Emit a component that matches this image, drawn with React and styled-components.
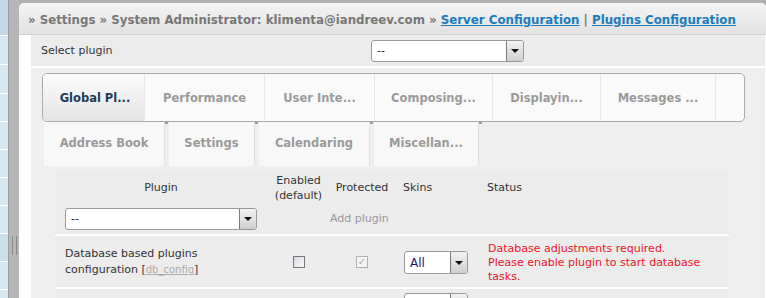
import React from 'react';
import styled, { createGlobalStyle } from 'styled-components';

const Global = createGlobalStyle`
  html, body { margin: 0; padding: 0; }
  body {
    width: 766px; height: 298px; overflow: hidden; background: #fff;
    font-family: "DejaVu Sans", Verdana, sans-serif; font-size: 11px; color: #333;
  }
`;

const Page = styled.div`
  display: flex; height: 298px; overflow: hidden;
`;

const SideList = styled.div`
  width: 8px; flex-shrink: 0; display: flex; flex-direction: column; background: #d6e9f2;
`;
const SideItem = styled.div`
  flex-shrink: 0; height: ${p => p.$h}px;
  background: ${p => (p.$dark ? '#c2dbe6' : p.$sel ? '#c9e0ea' : '#d6e9f2')};
  border-bottom: 1px solid #fff;
`;

const Splitter = styled.div`
  width: 11px; flex-shrink: 0; display: flex; flex-direction: column; align-items: center;
  padding-top: 236px; box-sizing: border-box;
  background: #b6b6b6; border-left: 1px solid #9c9c9c;
`;
const Grip = styled.div`
  width: 3px; height: 19px; border-left: 1px solid #8a8a8a; border-right: 1px solid #8a8a8a;
`;

const Main = styled.div`
  flex: 1; background: #b0b0b0; padding-top: 3px; display: flex; flex-direction: column;
`;
const Panel = styled.div`
  flex: 1; background: #fff; border-radius: 5px 5px 0 0; overflow: hidden;
  display: flex; flex-direction: column;
`;
const Header = styled.div`
  height: 32px; box-sizing: border-box; padding: 2px 0 0 9px; flex-shrink: 0;
  display: flex; align-items: center;
  background: linear-gradient(#f4f4f4, #e2e2e2); border-bottom: 1px solid #d2d2d2;
  font-weight: bold; font-size: 11.8px; color: #777; white-space: nowrap;
`;
const HeadLink = styled.a`
  color: #1c7cbd; text-decoration: underline;
`;
const Body = styled.div`
  flex: 1; padding: 0 1px 0 12px; display: flex;
`;
const Content = styled.div`
  flex: 1; background: #efefef; display: flex; flex-direction: column;
`;
const SelectRow = styled.div`
  height: 31px; display: flex; align-items: center; padding-left: 10px;
  border-bottom: 2px solid #fff; background: #ececec;
`;
const SelectLabel = styled.div`
  width: 330px; color: #333;
`;
const FakeSelect = styled.div`
  width: ${p => p.$w}px; height: ${p => p.$h || 22}px; box-sizing: border-box;
  border: 1px solid #9a9a9a; border-radius: 3px; background: #fff;
  display: flex; align-items: stretch; overflow: hidden;
`;
const SelectText = styled.span`
  flex: 1; display: flex; align-items: center; padding-left: 5px; color: ${p => p.$c || '#222'};
  font-size: ${p => p.$fs || 11}px;
`;
const SelectBtn = styled.span`
  width: 16px; border-left: 1px solid #7a7a7a; display: flex; align-items: center; justify-content: center;
  background: linear-gradient(#f2f2f2, #cfcfcf);
  &::after {
    content: ''; border-left: 4px solid transparent; border-right: 4px solid transparent;
    border-top: 4px solid #111;
  }
`;

const TabsArea = styled.div`
  padding: 5px 20px 0 11px;
`;
const TabBox = styled.div`
  height: 49px; box-sizing: border-box; border: 1px solid #aaa; border-radius: 5px;
  display: flex; background: #fafafa; overflow: hidden;
`;
const Tab = styled.div`
  display: flex; align-items: center; justify-content: center; flex-shrink: 0;
  width: ${p => p.$w}px; box-sizing: border-box; padding-left: ${p => (p.$active ? 3 : 0)}px;
  border-right: 1px solid #e8e8e8;
  font-weight: bold; font-size: 11.5px; white-space: nowrap;
  color: ${p => (p.$active ? '#1b3d5b' : '#9a9a9a')};
  background: ${p => (p.$active ? 'linear-gradient(#fcfcfc, #e4e4e4)' : '#fafafa')};
  border-radius: ${p => (p.$active ? '4px 0 0 4px' : '0')};
`;
const TabRow2 = styled.div`
  display: flex; padding-left: 2px; height: 44px;
`;
const Tab2 = styled.div`
  display: flex; align-items: center; justify-content: center; width: ${p => p.$w}px;
  background: #f8f8f8; margin-right: 4px; position: relative; padding-bottom: 2px;
  font-weight: bold; font-size: 11.5px; color: #9a9a9a; white-space: nowrap;
  border-right: 1px solid #e2e2e2;
  &::after {
    content: ''; position: absolute; top: 0; right: -4px; width: 3px; height: 2px; background: #9a9a9a;
  }
`;

const Table = styled.table`
  margin: 5px 0 0 24px; width: 674px; border-collapse: collapse; background: #ececec;
  table-layout: fixed;
`;
const Th = styled.th`
  box-sizing: border-box;
  width: ${p => p.$w}px; height: 33px; font-weight: normal; color: #333; font-size: 11px;
  text-align: ${p => p.$align || 'center'}; padding: 0 0 0 ${p => p.$pl || 0}px;
  line-height: 15px; vertical-align: middle;
`;
const Tr = styled.tr`
  border-top: ${p => (p.$line ? '2px solid #fff' : 'none')};
`;
const Td = styled.td`
  box-sizing: border-box;
  height: ${p => p.$h}px; padding: ${p => p.$pt || 0}px 0 0 ${p => p.$pl || 0}px;
  text-align: ${p => p.$align || 'left'}; vertical-align: ${p => p.$va || 'middle'};
  line-height: ${p => p.$lh || 16}px; color: ${p => p.$c || '#333'}; white-space: ${p => p.$ws || 'normal'};
`;
const SmallLink = styled.a`
  color: #aaa; text-decoration: underline; font-size: 10px;
`;
const Check = styled.span`
  display: inline-block; width: 12px; height: 12px; box-sizing: border-box; vertical-align: middle;
  border: 1px solid ${p => (p.$dis ? '#b0b0b0' : '#777')};
  background: ${p => (p.$dis ? '#f4f4f4' : 'linear-gradient(135deg, #d8d8e4, #fafafa)')};
  color: #aaa; font-size: 10px; line-height: 10px; text-align: center;
`;
const Status = styled.div`
  color: #f0132a; line-height: 14px; width: 228px;
`;

export default function App() {
  const side = [
    { h: 35, dark: true }, { h: 28 }, { h: 28 }, { h: 27 }, { h: 27 }, { h: 27 },
    { h: 27 }, { h: 27 }, { h: 27, sel: true }, { h: 27 }, { h: 27 },
  ];
  return (
    <>
      <Global />
      <Page>
        <SideList>
          {side.map((s, i) => <SideItem key={i} $h={s.h} $dark={s.dark} $sel={s.sel} />)}
        </SideList>
        <Splitter><Grip /></Splitter>
        <Main>
          <Panel>
            <Header>
              » Settings » System Administrator: klimenta@iandreev.com »&nbsp;
              <HeadLink>Server Configuration</HeadLink>&nbsp;|&nbsp;
              <HeadLink>Plugins Configuration</HeadLink>
            </Header>
            <Body>
              <Content>
                <SelectRow>
                  <SelectLabel>Select plugin</SelectLabel>
                  <FakeSelect $w={153}><SelectText>--</SelectText><SelectBtn /></FakeSelect>
                </SelectRow>
                <TabsArea>
                  <TabBox>
                    <Tab $w={102} $active>Global Pl...</Tab>
                    <Tab $w={120}>Performance</Tab>
                    <Tab $w={110}>User Inte...</Tab>
                    <Tab $w={118}>Composing...</Tab>
                    <Tab $w={108}>Displayin...</Tab>
                    <Tab $w={115}>Messages ...</Tab>
                  </TabBox>
                  <TabRow2>
                    <Tab2 $w={120}>Address Book</Tab2>
                    <Tab2 $w={85}>Settings</Tab2>
                    <Tab2 $w={110}>Calendaring</Tab2>
                    <Tab2 $w={104}>Miscellan...</Tab2>
                  </TabRow2>
                </TabsArea>
                <Table>
                  <thead>
                    <tr>
                      <Th $w={212}>Plugin</Th>
                      <Th $w={63}>Enabled<br />(default)</Th>
                      <Th $w={64}>Protected</Th>
                      <Th $w={86} $align="left" $pl={9}>Skins</Th>
                      <Th $w={249} $align="left" $pl={7}>Status</Th>
                    </tr>
                  </thead>
                  <tbody>
                    <Tr>
                      <Td $h={31} $pl={10}>
                        <FakeSelect $w={192} $h={22}><SelectText>--</SelectText><SelectBtn /></FakeSelect>
                      </Td>
                      <Td />
                      <Td colSpan={2} $c="#999" $ws="nowrap" $pl={0}>Add plugin</Td>
                      <Td />
                    </Tr>
                    <Tr $line>
                      <Td $h={53} $pl={10} $pt={1}>
                        Database based plugins<br />configuration [<SmallLink>db_config</SmallLink>]
                      </Td>
                      <Td $align="center" $pt={1}><Check /></Td>
                      <Td $align="center" $pt={1}><Check $dis>✓</Check></Td>
                      <Td $pl={10} $pt={2}>
                        <FakeSelect $w={64} $h={23}><SelectText $c="#1a1a6a" $fs={12}>All</SelectText><SelectBtn /></FakeSelect>
                      </Td>
                      <Td $pl={8} $pt={3}>
                        <Status>Database adjustments required.<br />Please enable plugin to start database tasks.</Status>
                      </Td>
                    </Tr>
                    <Tr $line>
                      <Td $h={30} />
                      <Td />
                      <Td />
                      <Td $pl={10} $va="top" $pt={4}>
                        <FakeSelect $w={64} $h={23}><SelectText /><SelectBtn /></FakeSelect>
                      </Td>
                      <Td />
                    </Tr>
                  </tbody>
                </Table>
              </Content>
            </Body>
          </Panel>
        </Main>
      </Page>
    </>
  );
}
